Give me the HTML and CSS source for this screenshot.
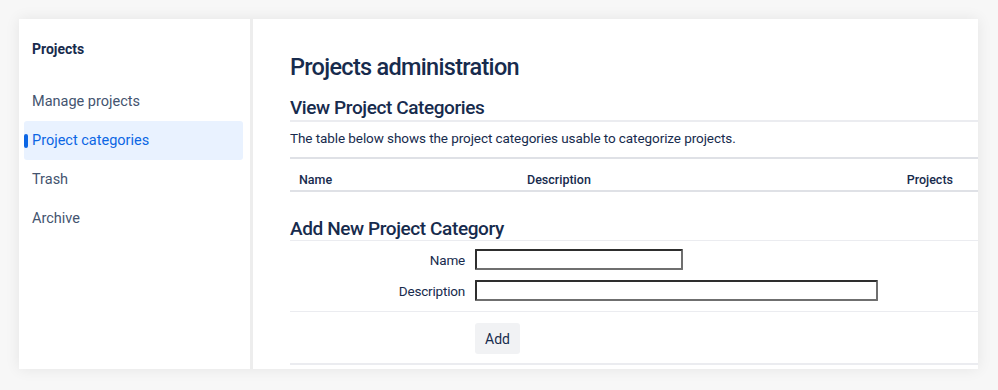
FILE: index.html
```html
<!DOCTYPE html>
<html lang="en">
<head>
    <meta charset="UTF-8">
    <meta name="viewport" content="width=device-width, initial-scale=1.0">
    <title>Projects administration</title>
    <link rel="stylesheet" href="styles.css">
</head>
<body>
    <div class="page">
        <nav class="sidebar">
            <h3 class="sidebar-title">Projects</h3>
            <a class="nav-item" href="#">Manage projects</a>
            <a class="nav-item active" href="#">Project categories</a>
            <a class="nav-item" href="#">Trash</a>
            <a class="nav-item" href="#">Archive</a>
        </nav>

        <main class="content">
            <h1>Projects administration</h1>

            <h2 class="section-title">View Project Categories</h2>
            <p class="intro">The table below shows the project categories usable to categorize projects.</p>

            <table class="category-table">
                <thead>
                    <tr>
                        <th class="col-name">Name</th>
                        <th class="col-desc">Description</th>
                        <th class="col-projects">Projects</th>
                    </tr>
                </thead>
            </table>

            <h2 class="section-title thin">Add New Project Category</h2>
            <form class="add-form" onsubmit="return false">
                <div class="form-row">
                    <label for="catName">Name</label>
                    <input type="text" id="catName" class="input-name">
                </div>
                <div class="form-row">
                    <label for="catDesc">Description</label>
                    <input type="text" id="catDesc" class="input-desc">
                </div>
                <div class="form-buttons">
                    <button type="submit" class="btn">Add</button>
                </div>
            </form>
        </main>
    </div>
</body>
</html>
```

FILE: styles.css
```css
body {
    margin: 0;
    padding: 19px 20px 21px 19px;
    background-color: #f7f7f7;
    font-family: Roboto, "Noto Sans", Arial, sans-serif;
    color: #172b4d;
}
.page {
    display: flex;
    height: 350px;
    background: white;
    box-shadow: 0 0 14px rgba(0,0,0,0.08);
    overflow: hidden;
}
.sidebar {
    width: 219px;
    flex-shrink: 0;
    padding: 20px 7px 0 5px;
    border-right: 3px solid #ededed;
    display: flex;
    flex-direction: column;
}
.sidebar-title {
    margin: 0 0 23px 8px;
    font-size: 14px;
    line-height: 20px;
    font-weight: 700;
    color: #172b4d;
}
.nav-item {
    position: relative;
    display: block;
    height: 39px;
    line-height: 39px;
    padding-left: 8px;
    border-radius: 3px;
    font-size: 14.5px;
    color: #44546f;
    text-decoration: none;
}
.nav-item.active {
    background-color: #e9f2ff;
    color: #0c66e4;
}
.nav-item.active::before {
    content: "";
    position: absolute;
    left: 0;
    top: 13px;
    width: 4px;
    height: 14px;
    border-radius: 2px;
    background-color: #0c66e4;
}
.content {
    flex: 1;
    padding: 34px 0 0 37px;
}
h1 {
    margin: 0;
    font-size: 23.5px;
    line-height: 28px;
    font-weight: 500;
    letter-spacing: -0.7px;
}
.section-title {
    margin: 15px 0 0;
    font-size: 19px;
    line-height: 24px;
    font-weight: 500;
    letter-spacing: -0.4px;
    border-bottom: 2px solid #ebecf0;
}
.section-title.thin {
    margin-top: 26px;
    line-height: 22px;
    border-bottom-width: 1px;
}
.intro {
    margin: 6px 0 0;
    font-size: 13.5px;
    line-height: 20px;
    letter-spacing: -0.08px;
}
.category-table {
    width: 100%;
    margin-top: 9px;
    border-collapse: collapse;
    border-top: 2px solid #dfe1e6;
    border-bottom: 2px solid #dfe1e6;
}
.category-table th {
    height: 22px;
    padding: 9px 9px 0;
    font-size: 12.5px;
    font-weight: 500;
    text-align: left;
    color: #172b4d;
}
.col-name {
    width: 210px;
}
.col-projects {
    width: 46px;
    padding-right: 25px !important;
}
.add-form {
    font-size: 13.5px;
}
.form-row {
    display: flex;
    align-items: center;
    gap: 10px;
    margin-top: 10px;
}
.form-row:first-child {
    margin-top: 8px;
}
.form-row label {
    width: 175px;
    text-align: right;
    letter-spacing: -0.2px;
}
.form-row input {
    box-sizing: border-box;
    height: 21px;
    margin: 0;
    border: 2px solid #2e2e2e;
    border-bottom-color: #6f6f6f;
    border-right-color: #6f6f6f;
    border-radius: 1px;
    background: white;
    font-size: 13px;
}
.input-name {
    width: 208px;
}
.input-desc {
    width: 403px;
}
.form-buttons {
    margin-top: 10px;
    padding: 11px 0 9px 185px;
    border-top: 1px solid #ebecf0;
    border-bottom: 2px solid #ebecf0;
}
.btn {
    height: 31px;
    padding: 0 10px;
    border: none;
    border-radius: 3px;
    background-color: #f1f2f4;
    font-family: inherit;
    font-size: 14px;
    color: #172b4d;
    cursor: pointer;
}
```
